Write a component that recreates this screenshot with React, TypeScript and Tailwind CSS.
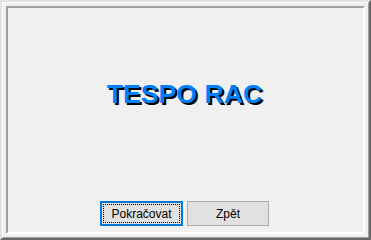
export default function App() {
  return (
    <div className="w-[371px] h-[240px] bg-[#f0f0f0] border-2 border-t-[#e3e3e3] border-l-[#e3e3e3] border-r-[#696969] border-b-[#696969] [font-family:'Liberation_Sans',Arial,sans-serif]">
      <div className="w-full h-full border border-t-white border-l-white border-r-[#a0a0a0] border-b-[#a0a0a0] p-[3px]">
        <div className="w-full h-full border-2 border-t-[#a0a0a0] border-l-[#a0a0a0] border-r-white border-b-white flex flex-col">
          <div className="pt-[73px] text-center text-[20pt] leading-none font-bold text-[#0080ff] [text-shadow:2px_2px_0_#000] pr-[2px]">
            TESPO RAC
          </div>
          <div className="mt-auto pb-[6px] pr-[2px] flex justify-center gap-[4px]">
            <button className="w-[83px] h-[25px] bg-[#e1e1e1] border-2 border-[#0078d7] p-[1px] text-[12px] text-black">
              <span className="w-full h-full flex items-center justify-center border border-dotted border-black">
                Pokračovat
              </span>
            </button>
            <button className="w-[82px] h-[25px] bg-[#e1e1e1] border border-[#adadad] text-[12px] text-black flex items-center justify-center">
              Zpět
            </button>
          </div>
        </div>
      </div>
    </div>
  );
}
